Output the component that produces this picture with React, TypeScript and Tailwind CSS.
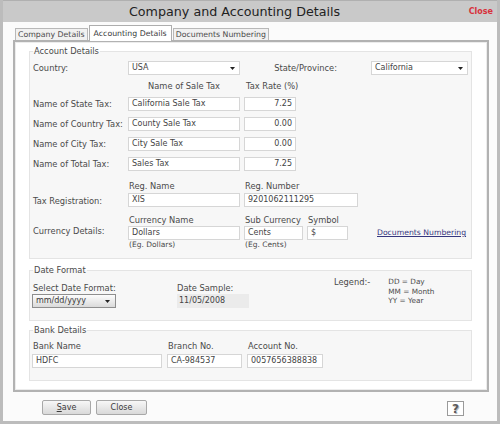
import React from 'react';

function Caret() {
  return (
    <svg width="5" height="3" viewBox="0 0 5 3" className="shrink-0">
      <path d="M0 0h5L2.5 3z" fill="#222" />
    </svg>
  );
}

function Input({ value, className = '' }: { value: string; className?: string }) {
  return (
    <div className={`h-[14px] shrink-0 border border-[#d6d6d6] bg-white px-[3px] text-[8px] leading-[12px] text-[#444] whitespace-nowrap overflow-hidden ${className}`}>
      {value}
    </div>
  );
}

function Select({ value, className = '' }: { value: string; className?: string }) {
  return (
    <div className={`h-[14px] shrink-0 flex items-center justify-between border border-[#d6d6d6] bg-white pl-[3px] pr-[4px] text-[8px] leading-[12px] text-[#444] ${className}`}>
      <span>{value}</span>
      <Caret />
    </div>
  );
}

function TaxRow({ label, name, rate }: { label: string; name: string; rate: string }) {
  return (
    <div className="flex items-center h-[14px] mt-[6px] first:mt-[5px]">
      <span className="w-[95px] shrink-0">{label}</span>
      <Input value={name} className="w-[112px]" />
      <Input value={rate} className="ml-[4px] w-[52px] text-right" />
    </div>
  );
}

export default function App() {
  return (
    <div className="w-[500px] h-[424px] overflow-hidden bg-[#fbfbfb] border-l-[3px] border-r-[3px] border-b-[3px] border-[#bcbcbc] font-['DejaVu_Sans',sans-serif] text-[8.3px] leading-[12px] text-[#4a4a4a]">
      {/* title bar */}
      <div className="h-[22px] flex items-center bg-[#c9c9c9] border-t border-[#b0b0b0]">
        <span className="ml-[126px] text-[12.7px] text-[#222]">Company and Accounting Details</span>
        <span className="ml-auto mr-[4px] text-[8px] font-bold text-[#d8313b]">Close</span>
      </div>

      {/* tabs */}
      <div className="mt-[3px] ml-[12px] h-[15px] flex items-end text-[7.8px]">
        <div className="h-[12px] px-[2px] flex items-center border border-b-0 border-[#b8b8b8] bg-[#f1f1f1] text-[#4a4a4a]">Company Details</div>
        <div className="relative z-10 h-[16px] -mb-[1px] ml-[1px] px-[4px] flex items-center border border-b-0 border-[#adadad] bg-white text-[#3a3a3a]">Accounting Details</div>
        <div className="h-[12px] ml-[1px] px-[2px] flex items-center border border-b-0 border-[#b8b8b8] bg-[#f1f1f1] text-[#4a4a4a]">Documents Numbering</div>
      </div>

      {/* panel */}
      <div className="ml-[10px] w-[476px] h-[352px] border-2 border-[#b2b2b2] bg-white shadow-[inset_0_0_0_1px_#ececec] pt-[3px] pl-[14px]">
        {/* Account Details */}
        <fieldset className="w-[443px] border border-[#e4e4e4] bg-[#f7f7f7] px-[3px] pb-[8px]">
          <legend className="px-[1px]">Account Details</legend>
          <div className="flex items-center h-[14px] mt-[4px]">
            <span className="w-[95px] shrink-0">Country:</span>
            <Select value="USA" className="w-[112px]" />
            <span className="w-[131px] shrink-0 text-right pr-[34px]">State/Province:</span>
            <Select value="California" className="w-[97px]" />
          </div>
          <div className="flex h-[12px] mt-[5px]">
            <span className="w-[95px] shrink-0" />
            <span className="w-[112px] text-center">Name of Sale Tax</span>
            <span className="ml-[6px] whitespace-nowrap">Tax Rate (%)</span>
          </div>
          <div className="flex flex-col">
            <TaxRow label="Name of State Tax:" name="California Sale Tax" rate="7.25" />
            <TaxRow label="Name of Country Tax:" name="County Sale Tax" rate="0.00" />
            <TaxRow label="Name of City Tax:" name="City Sale Tax" rate="0.00" />
            <TaxRow label="Name of Total Tax:" name="Sales Tax" rate="7.25" />
          </div>

          {/* tax registration */}
          <div className="flex mt-[9px]">
            <span className="w-[95px] shrink-0 mt-[15px]">Tax Registration:</span>
            <div className="flex flex-col">
              <span className="w-[112px] pl-[1px]">Reg. Name</span>
              <Input value="XIS" className="mt-[1px] w-[112px]" />
            </div>
            <div className="flex flex-col ml-[4px]">
              <span className="pl-[1px]">Reg. Number</span>
              <Input value="9201062111295" className="mt-[1px] w-[114px]" />
            </div>
          </div>

          {/* currency */}
          <div className="flex mt-[7px]">
            <span className="w-[95px] shrink-0 mt-[11px]">Currency Details:</span>
            <div className="flex flex-col">
              <span className="pl-[1px]">Currency Name</span>
              <Input value="Dollars" className="w-[112px]" />
              <span className="pl-[1px] text-[7.5px] leading-[10px]">(Eg. Dollars)</span>
            </div>
            <div className="flex flex-col ml-[4px]">
              <span className="pl-[1px] whitespace-nowrap">Sub Currency</span>
              <Input value="Cents" className="w-[59px]" />
              <span className="pl-[1px] text-[7.5px] leading-[10px]">(Eg. Cents)</span>
            </div>
            <div className="flex flex-col ml-[4px]">
              <span className="pl-[1px]">Symbol</span>
              <Input value="$" className="w-[41px]" />
            </div>
            <span className="ml-[29px] mt-[13px] h-[12px] underline text-[7.7px] text-[#36367e] whitespace-nowrap">Documents Numbering</span>
          </div>
        </fieldset>

        {/* Date Format */}
        <fieldset className="mt-[5px] w-[443px] border border-[#e4e4e4] bg-[#f7f7f7] px-[3px] pb-[12px]">
          <legend className="px-[1px]">Date Format</legend>
          <div className="flex items-start">
            <div className="flex flex-col mt-[7px] -ml-[1px]">
              <span className="leading-[11px] pl-[1px]">Select Date Format:</span>
              <div className="h-[14px] w-[84px] flex items-center justify-between border border-[#8e8e8e] bg-gradient-to-b from-[#fdfdfd] to-[#dadada] pl-[3px] pr-[5px] text-[8px] text-[#3a3a3a]">
                <span>mm/dd/yyyy</span>
                <Caret />
              </div>
            </div>
            <div className="flex flex-col mt-[7px] ml-[61px]">
              <span className="leading-[11px]">Date Sample:</span>
              <div className="h-[14px] w-[72px] bg-[#ebebeb] pl-[2px] text-[8px] leading-[14px] text-[#444]">11/05/2008</div>
            </div>
            <span className="ml-[85px]">Legend:-</span>
            <div className="ml-[18px] mt-[1px] flex flex-col text-[7.3px] leading-[9.5px]">
              <span>DD = Day</span>
              <span>MM = Month</span>
              <span>YY = Year</span>
            </div>
          </div>
        </fieldset>

        {/* Bank Details */}
        <fieldset className="mt-[3px] w-[443px] border border-[#e4e4e4] bg-[#f7f7f7] px-[3px] pb-[12px]">
          <legend className="px-[1px]">Bank Details</legend>
          <div className="flex mt-[4px] -ml-[1px]">
            <div className="flex flex-col w-[130px]">
              <span className="pl-[1px]">Bank Name</span>
              <Input value="HDFC" className="mt-[2px] w-[130px]" />
            </div>
            <div className="flex flex-col w-[75px] ml-[5px]">
              <span className="pl-[1px]">Branch No.</span>
              <Input value="CA-984537" className="mt-[2px] w-[75px]" />
            </div>
            <div className="flex flex-col w-[76px] ml-[5px]">
              <span className="pl-[1px]">Account No.</span>
              <Input value="0057656388838" className="mt-[2px] w-[76px]" />
            </div>
          </div>
        </fieldset>
      </div>

      {/* buttons */}
      <div className="flex items-start mt-[8px]">
        <button className="ml-[39px] h-[15px] w-[49px] border border-[#a8a8a8] rounded-[2px] bg-gradient-to-b from-[#f7f7f7] to-[#d9d9d9] text-[8px] leading-[13px] text-[#3a3a3a]">
          <span className="underline">S</span>ave
        </button>
        <button className="ml-[5px] h-[15px] w-[51px] border border-[#a8a8a8] rounded-[2px] bg-gradient-to-b from-[#f7f7f7] to-[#d9d9d9] text-[8px] leading-[13px] text-[#3a3a3a]">
          Close
        </button>
        <div className="ml-auto mr-[33px] mt-[1px] h-[15px] w-[17px] flex items-center justify-center border border-[#9a9a9a] bg-white text-[12px] font-bold leading-none text-[#5a5a5a] [text-shadow:1px_1px_0_#bdbdbd]">
          ?
        </div>
      </div>
    </div>
  );
}
